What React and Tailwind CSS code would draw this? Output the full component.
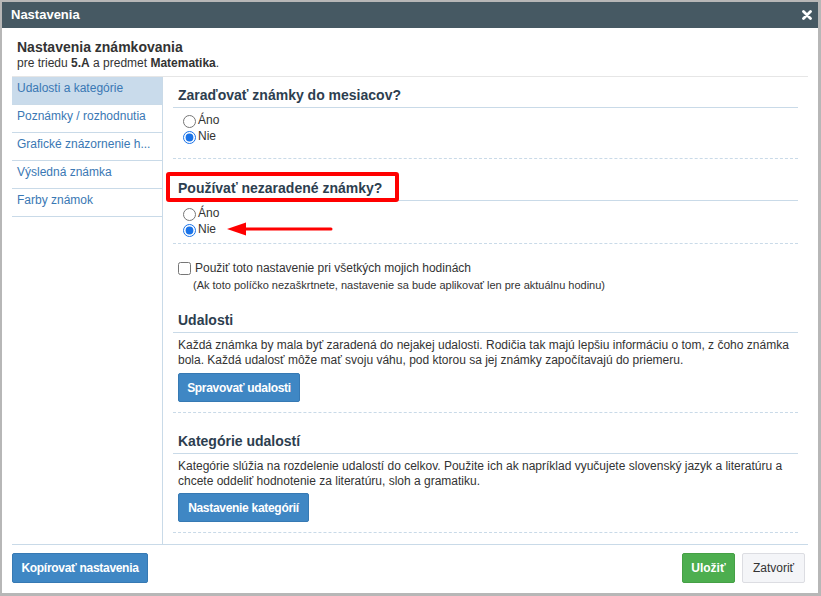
import React from "react";

const font = { fontFamily: '"Liberation Sans", Arial, sans-serif' };

const menu = [
  "Udalosti a kategórie",
  "Poznámky / rozhodnutia",
  "Grafické znázornenie h...",
  "Výsledná známka",
  "Farby známok",
];

function Radio({ label, checked }) {
  return (
    <label className="flex h-[16px] items-center text-[12px] leading-[16px] text-[#333]">
      <input
        type="radio"
        readOnly
        checked={checked}
        className="m-0 mt-[3px] size-[13px] accent-[#1a73e8]"
      />
      <span className="ml-[2px]">{label}</span>
    </label>
  );
}

function Heading({ children, className = "" }) {
  return (
    <div className={`border-b border-[#c9dae8] pb-[3px] pl-[5px] ${className}`}>
      <div className="text-[14px] font-bold leading-[18px] text-[#2d3e4f]">{children}</div>
    </div>
  );
}

function BlueButton({ children, className = "" }) {
  return (
    <button
      type="button"
      className={`h-[29px] whitespace-nowrap rounded-[2px] border border-[#3679b3] bg-[#3f87c4] px-0 text-[12px] font-bold tracking-[-0.3px] text-white ${className}`}
    >
      {children}
    </button>
  );
}

export default function App() {
  return (
    <div
      style={font}
      className="h-[596px] w-[821px] bg-[#b7b7b7] pb-[3px] pl-[2px] pr-[3px] pt-[2px]"
    >
      <div className="flex h-full flex-col bg-white">
        {/* header */}
        <div className="flex h-[26px] shrink-0 items-center justify-between bg-[#465963] pl-[9px] pr-[6px]">
          <span className="text-[13px] font-bold text-white">Nastavenia</span>
          <svg width="10" height="10" viewBox="0 0 10 10" aria-hidden="true">
            <path d="M1.5 1.5 L8.5 8.5 M8.5 1.5 L1.5 8.5" stroke="white" strokeWidth="2.8" strokeLinecap="round" />
          </svg>
        </div>

        {/* title */}
        <div className="shrink-0 px-[15px] pb-[6px] pt-[10px]">
          <div className="text-[14px] font-bold leading-[18px] text-[#333]">Nastavenia známkovania</div>
          <div className="text-[12px] leading-[14px] text-[#333]">
            pre triedu <b>5.A</b> a predmet <b>Matematika</b>.
          </div>
        </div>

        {/* main */}
        <div className="mx-[10px] flex min-h-0 flex-1 border-b border-t border-b-[#c9dae8] border-t-[#e6e6e6]">
          <div className="w-[151px] shrink-0 border-r border-[#c9dae8]">
            {menu.map((item, i) => (
              <div
                key={item}
                className={`h-[28px] border-b border-[#c9dae8] pl-[5px] pt-[3px] text-[12px] leading-[16px] text-[#3a78b4] ${
                  i === 0 ? "bg-[#c9dbeb]" : ""
                }`}
              >
                {item}
              </div>
            ))}
          </div>

          <div className="min-w-0 flex-1 overflow-hidden px-[10px]">
            {/* section 1 */}
            <Heading className="pt-[9px]">Zaraďovať známky do mesiacov?</Heading>
            <div className="mb-[14px] mt-[4px] pl-[10px]">
              <Radio label="Áno" />
              <Radio label="Nie" checked />
            </div>
            <div className="border-t border-dashed border-[#c9dae8]" />

            {/* section 2 */}
            <div className="border-b border-[#c9dae8] pb-[3px] pl-[5px] pt-[20px]">
              <div className="relative text-[14px] font-bold leading-[18px] text-[#2d3e4f]">
                Používať nezaradené známky?
                <div className="absolute left-[-12px] top-[-7px] h-[30px] w-[233px] rounded-[3px] border-[4px] border-[#ff0000]" />
              </div>
            </div>
            <div className="relative mb-[6px] mt-[4px] pl-[10px]">
              <Radio label="Áno" />
              <Radio label="Nie" checked />
              <svg
                className="absolute left-[54px] top-[16px]"
                width="106"
                height="16"
                viewBox="0 0 106 16"
                aria-hidden="true"
              >
                <path d="M0 8 L19 1.5 L19 14.5 Z" fill="#ff0000" />
                <path d="M17 8 L104 8" stroke="#ff0000" strokeWidth="3" strokeLinecap="round" />
              </svg>
            </div>
            <div className="border-t border-dashed border-[#c9dae8]" />

            {/* checkbox */}
            <label className="mt-[16px] flex h-[16px] items-center pl-[5px] text-[12px] leading-[16px] text-[#333]">
              <input type="checkbox" readOnly className="m-0 size-[13px]" />
              <span className="ml-[4px]">Použiť toto nastavenie pri všetkých mojich hodinách</span>
            </label>
            <div className="mt-[2px] pl-[20px] text-[11px] leading-[14px] text-[#333]">
              (Ak toto políčko nezaškrtnete, nastavenie sa bude aplikovať len pre aktuálnu hodinu)
            </div>

            {/* udalosti */}
            <Heading className="pt-[19px]">Udalosti</Heading>
            <div className="mt-[5px] pl-[5px] text-[12px] leading-[15px] text-[#333]">
              Každá známka by mala byť zaradená do nejakej udalosti. Rodičia tak majú lepšiu informáciu o tom, z čoho známka
              bola. Každá udalosť môže mať svoju váhu, pod ktorou sa jej známky započítavajú do priemeru.
            </div>
            <div className="mb-[10px] mt-[5px] pl-[5px]">
              <BlueButton className="w-[122px]">Spravovať udalosti</BlueButton>
            </div>
            <div className="border-t border-dashed border-[#c9dae8]" />

            {/* kategorie */}
            <Heading className="pt-[19px]">Kategórie udalostí</Heading>
            <div className="mt-[5px] pl-[5px] text-[12px] leading-[15px] text-[#333]">
              Kategórie slúžia na rozdelenie udalostí do celkov. Použite ich ak napríklad vyučujete slovenský jazyk a literatúru a
              chcete oddeliť hodnotenie za literatúru, sloh a gramatiku.
            </div>
            <div className="mb-[10px] mt-[4px] pl-[5px]">
              <BlueButton className="w-[131px]">Nastavenie kategórií</BlueButton>
            </div>
            <div className="border-t border-dashed border-[#c9dae8]" />
          </div>
        </div>

        {/* footer */}
        <div className="flex h-[48px] shrink-0 items-start justify-between pl-[10px] pr-[13px] pt-[8px]">
          <BlueButton className="h-[30px] w-[136px]">Kopírovať nastavenia</BlueButton>
          <div className="flex gap-[7px]">
            <button
              type="button"
              className="h-[30px] w-[53px] rounded-[2px] border border-[#45a045] bg-[#4dae4f] text-[12px] font-bold text-white"
            >
              Uložiť
            </button>
            <button
              type="button"
              className="h-[30px] w-[63px] rounded-[2px] border border-[#dcdde2] bg-[#f4f5f8] text-[12px] text-[#333]"
            >
              Zatvoriť
            </button>
          </div>
        </div>
      </div>
    </div>
  );
}
